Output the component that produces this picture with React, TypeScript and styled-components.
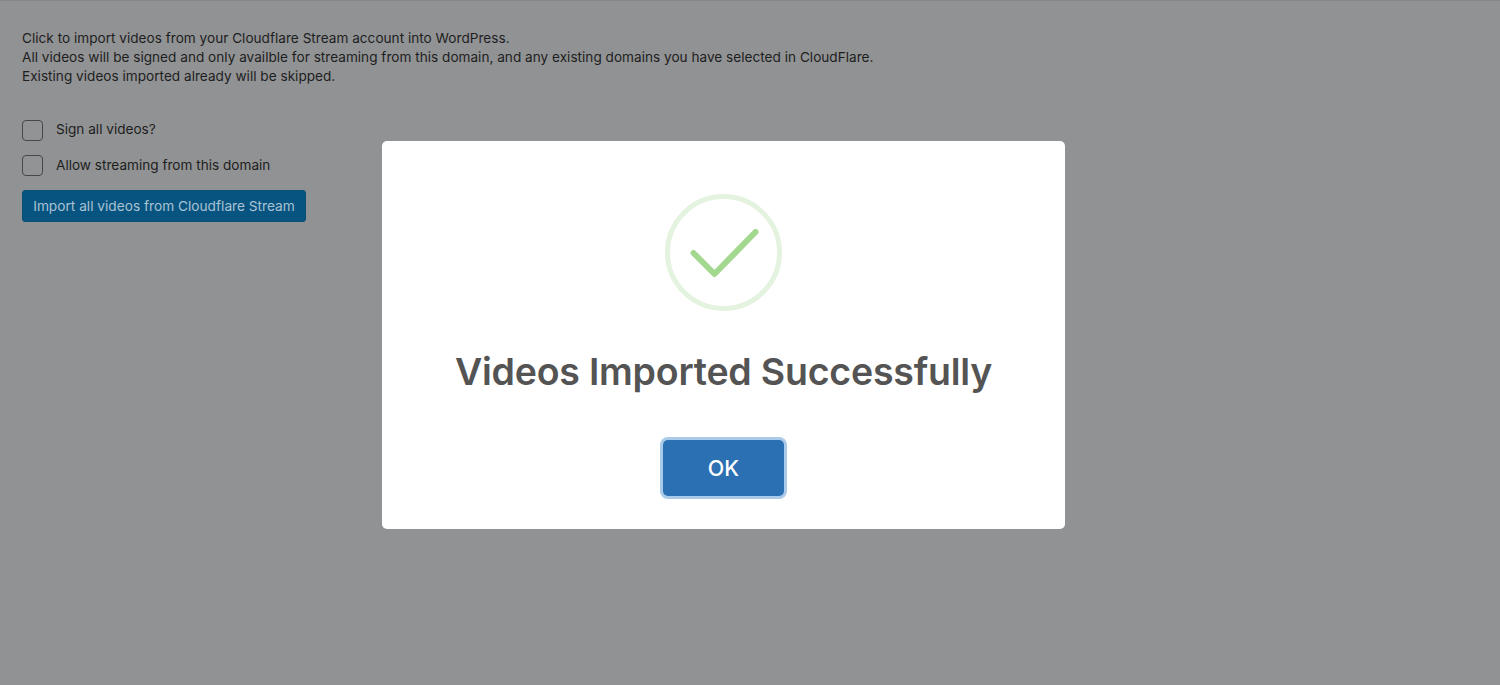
import styled, { createGlobalStyle } from 'styled-components';

const GlobalStyle = createGlobalStyle`
  html, body {
    margin: 0;
    padding: 0;
    height: 100%;
    background: #919294;
  }
  body {
    font-family: Inter, "Liberation Sans", sans-serif;
  }
`;

const Page = styled.div`
  position: relative;
  width: 1500px;
  height: 685px;
  overflow: hidden;
  box-sizing: border-box;
  padding: 28px 22px 0;
  background: #919294;
  border-top: 1px solid #85868a;
  color: #1d1e20;
`;

const Intro = styled.p`
  margin: 0 0 34px;
  font-size: 13.6px;
  letter-spacing: 0.012px;
  line-height: 19px;
`;

const OptionRow = styled.label`
  display: flex;
  align-items: center;
  gap: 13px;
  height: 21px;
  margin-bottom: 14px;
  font-size: 13.6px;
`;

const OptionText = styled.span<{ $raise: number }>`
  margin-top: ${(p) => -p.$raise * 2}px;
`;

const Checkbox = styled.span`
  box-sizing: border-box;
  width: 21px;
  height: 21px;
  border: 1px solid #44474b;
  border-radius: 4px;
  background: #929395;
`;

const ImportButton = styled.button`
  display: block;
  box-sizing: border-box;
  width: 284px;
  height: 32px;
  padding: 0;
  border: 1px solid #07507a;
  border-radius: 3px;
  background: #085481;
  color: #a9c2d2;
  font-family: inherit;
  font-size: 13.7px;
`;

const Overlay = styled.div`
  position: absolute;
  top: 140px;
  left: 382px;
`;

const Modal = styled.div`
  display: flex;
  flex-direction: column;
  align-items: center;
  box-sizing: border-box;
  width: 683px;
  height: 388px;
  padding-top: 53px;
  border-radius: 5px;
  background: #fff;
`;

const SuccessIcon = styled.svg`
  display: block;
  width: 118px;
  height: 118px;
`;

const Title = styled.h2`
  margin: 33px 0 0;
  font-size: 37.5px;
  line-height: 54px;
  font-weight: 600;
  letter-spacing: -0.22px;
  color: #545454;
  white-space: nowrap;
`;

const ConfirmButton = styled.button`
  box-sizing: border-box;
  width: 121px;
  height: 56px;
  margin-top: 41px;
  padding: 0;
  border: 0;
  border-radius: 5px;
  background: #2a70b3;
  box-shadow: 0 0 0 3px #a9cbe9;
  color: #fff;
  font-family: inherit;
  font-size: 21.5px;
  font-weight: 500;
`;

export default function App() {
  return (
    <>
      <GlobalStyle />
      <Page>
        <Intro>
          Click to import videos from your Cloudflare Stream account into WordPress.
          <br />
          All videos will be signed and only availble for streaming from this domain, and any existing domains you have selected in CloudFlare.
          <br />
          Existing videos imported already will be skipped.
        </Intro>
        <OptionRow>
          <Checkbox />
          <OptionText $raise={2}>Sign all videos?</OptionText>
        </OptionRow>
        <OptionRow>
          <Checkbox />
          <OptionText $raise={1}>Allow streaming from this domain</OptionText>
        </OptionRow>
        <ImportButton>Import all videos from Cloudflare Stream</ImportButton>
        <Overlay>
          <Modal>
            <SuccessIcon viewBox="0 0 118 118">
              <circle cx="58.5" cy="58.5" r="56" fill="none" stroke="#e4f3df" strokeWidth="5" />
              <path d="M28.5 59 L49.5 80 L90.5 38" fill="none" stroke="#a3d98f" strokeWidth="6" strokeLinecap="round" strokeLinejoin="round" />
            </SuccessIcon>
            <Title>Videos Imported Successfully</Title>
            <ConfirmButton>OK</ConfirmButton>
          </Modal>
        </Overlay>
      </Page>
    </>
  );
}
